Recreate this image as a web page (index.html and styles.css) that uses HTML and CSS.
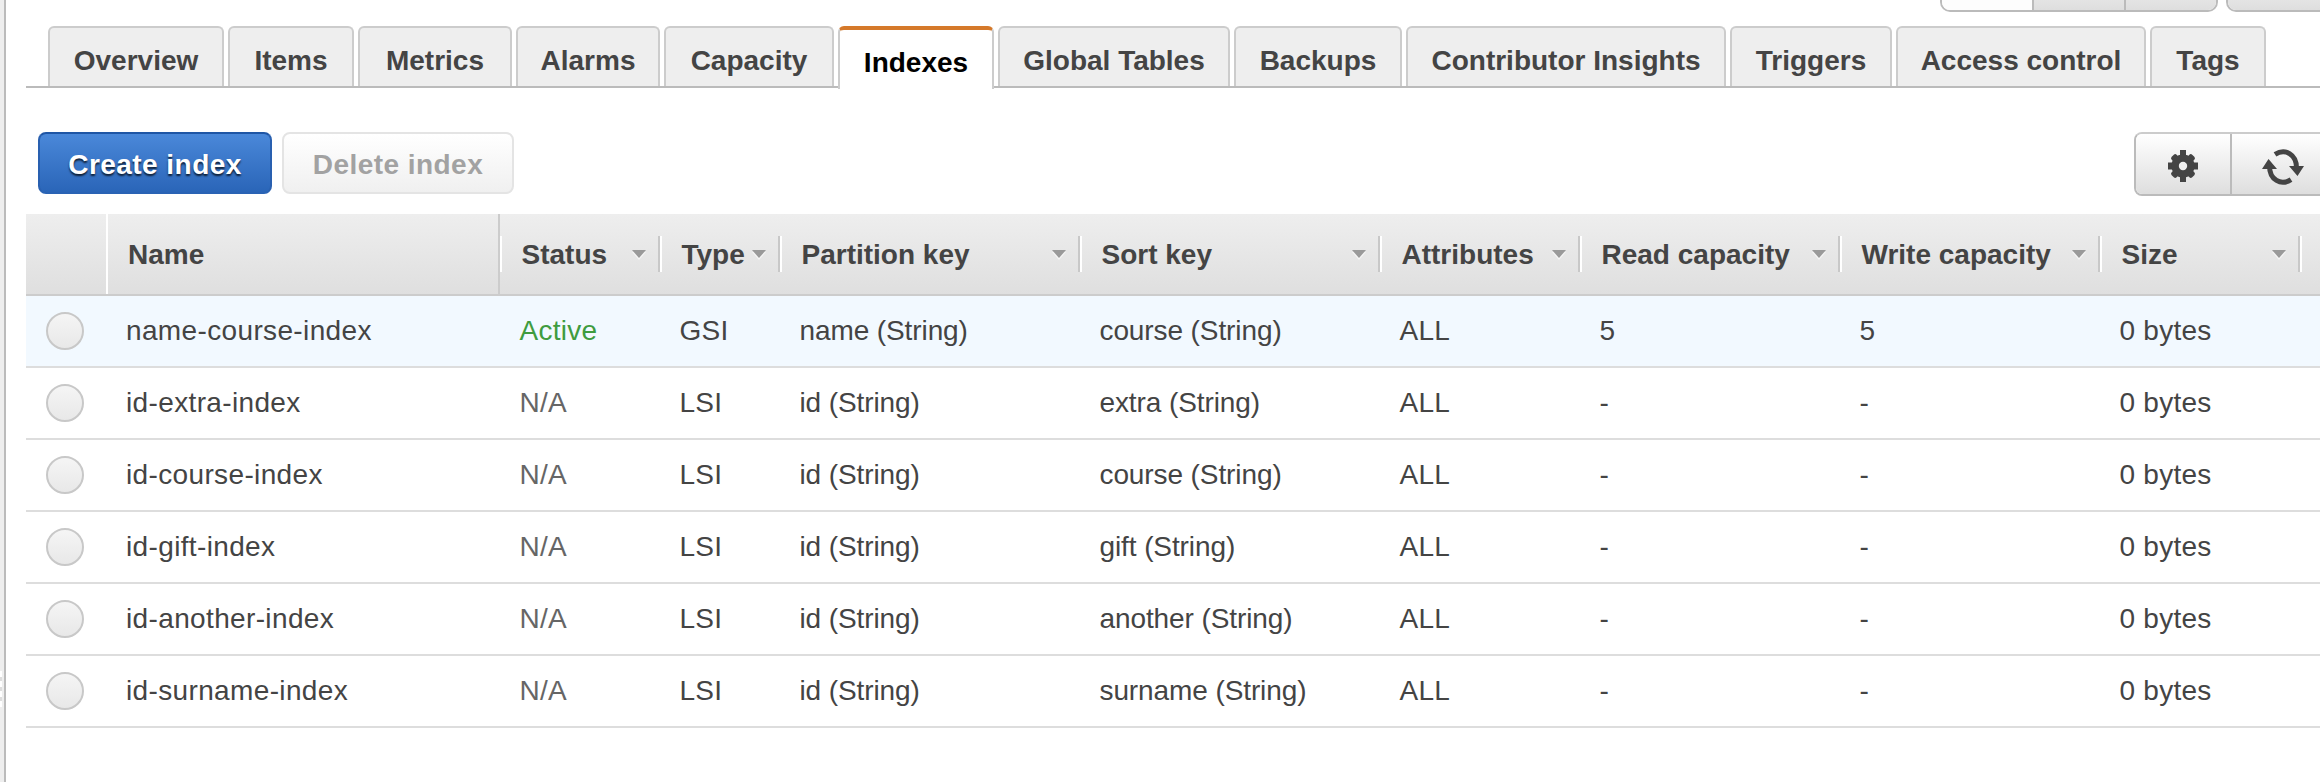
FILE: index.html
```html
<!DOCTYPE html>
<html lang="en">
<head>
<meta charset="utf-8">
<title>Indexes</title>
<link rel="stylesheet" href="styles.css">
</head>
<body>
<div class="app">
  <div class="splitter"><span class="grip"></span></div>
  <main class="panel">
    <div class="window-controls">
      <div class="segments"><span class="segment selected"></span><span class="segment"></span><span class="segment"></span></div>
      <div class="segments extra"><span class="segment"></span></div>
    </div>
    <nav class="tabs">
      <a class="tab t-overview">Overview</a>
      <a class="tab t-items">Items</a>
      <a class="tab t-metrics">Metrics</a>
      <a class="tab t-alarms">Alarms</a>
      <a class="tab t-capacity">Capacity</a>
      <a class="tab t-indexes active">Indexes</a>
      <a class="tab t-global">Global Tables</a>
      <a class="tab t-backups">Backups</a>
      <a class="tab t-insights">Contributor Insights</a>
      <a class="tab t-triggers">Triggers</a>
      <a class="tab t-access">Access control</a>
      <a class="tab t-tags">Tags</a>
    </nav>
    <div class="toolbar">
      <button class="btn primary">Create index</button>
      <button class="btn disabled" disabled>Delete index</button>
      <div class="tools">
        <button class="tool" aria-label="Settings">
          <svg class="gear" width="32" height="34" viewBox="-16 -17 32 34"><g fill="#444"><rect x="-3" y="-16" width="6" height="32"/><rect x="-15" y="-3.5" width="30" height="7"/><rect x="-3.5" y="-14.5" width="7" height="29" rx="2" transform="rotate(45)"/><rect x="-3.5" y="-14.5" width="7" height="29" rx="2" transform="rotate(-45)"/></g><circle r="7.8" fill="none" stroke="#444" stroke-width="7.6"/><circle r="4.2" fill="#f0f0f0"/></svg>
        </button>
        <button class="tool" aria-label="Refresh">
          <svg class="refresh" width="42" height="38" viewBox="-21 -19 42 38"><g fill="none" stroke="#444" stroke-width="5"><path d="M-8-12.6C2-19 13.5-13 13.5 1"/><path d="M8 12.6C-2 19-13.5 13-13.5-1"/></g><path d="M6-1L21-1L14.5 9ZM-6 2L-21 2L-14.5-8Z" fill="#444"/></svg>
        </button>
      </div>
    </div>
    <div class="table">
      <div class="row head">
        <div class="cell pick"></div>
        <div class="cell name">Name</div>
        <div class="cell">Status<i class="arrow"></i></div>
        <div class="cell">Type<i class="arrow"></i></div>
        <div class="cell">Partition key<i class="arrow"></i></div>
        <div class="cell">Sort key<i class="arrow"></i></div>
        <div class="cell">Attributes<i class="arrow"></i></div>
        <div class="cell">Read capacity<i class="arrow"></i></div>
        <div class="cell">Write capacity<i class="arrow"></i></div>
        <div class="cell">Size<i class="arrow"></i></div>
        <div class="cell"></div>
      </div>
      <div class="row highlighted"><div class="cell pick"><span class="radio"></span></div><div class="cell title">name-course-index</div><div class="cell ok">Active</div><div class="cell">GSI</div><div class="cell key">name (String)</div><div class="cell key">course (String)</div><div class="cell">ALL</div><div class="cell">5</div><div class="cell">5</div><div class="cell">0 bytes</div></div>
      <div class="row"><div class="cell pick"><span class="radio"></span></div><div class="cell title">id-extra-index</div><div class="cell na">N/A</div><div class="cell">LSI</div><div class="cell key">id (String)</div><div class="cell key">extra (String)</div><div class="cell">ALL</div><div class="cell">-</div><div class="cell">-</div><div class="cell">0 bytes</div></div>
      <div class="row"><div class="cell pick"><span class="radio"></span></div><div class="cell title">id-course-index</div><div class="cell na">N/A</div><div class="cell">LSI</div><div class="cell key">id (String)</div><div class="cell key">course (String)</div><div class="cell">ALL</div><div class="cell">-</div><div class="cell">-</div><div class="cell">0 bytes</div></div>
      <div class="row"><div class="cell pick"><span class="radio"></span></div><div class="cell title">id-gift-index</div><div class="cell na">N/A</div><div class="cell">LSI</div><div class="cell key">id (String)</div><div class="cell key">gift (String)</div><div class="cell">ALL</div><div class="cell">-</div><div class="cell">-</div><div class="cell">0 bytes</div></div>
      <div class="row"><div class="cell pick"><span class="radio"></span></div><div class="cell title">id-another-index</div><div class="cell na">N/A</div><div class="cell">LSI</div><div class="cell key">id (String)</div><div class="cell key">another (String)</div><div class="cell">ALL</div><div class="cell">-</div><div class="cell">-</div><div class="cell">0 bytes</div></div>
      <div class="row"><div class="cell pick"><span class="radio"></span></div><div class="cell title">id-surname-index</div><div class="cell na">N/A</div><div class="cell">LSI</div><div class="cell key">id (String)</div><div class="cell key">surname (String)</div><div class="cell">ALL</div><div class="cell">-</div><div class="cell">-</div><div class="cell">0 bytes</div></div>
    </div>
  </main>
</div>
</body>
</html>
```
FILE: styles.css
```css
* { box-sizing: border-box; }
body {
  margin: 0;
  background: #fff;
  color: #444;
  font: 28px/1 "Liberation Sans", Arial, sans-serif;
  overflow: hidden;
}
.app { display: flex; height: 782px; }
.splitter {
  display: flex;
  flex: 0 0 6px;
  background: #eee;
  border-right: 2px solid #bbb;
}
.grip {
  width: 2px;
  height: 36px;
  margin-top: 671px;
  background: repeating-linear-gradient(#fff 0 6px, #ddd 6px 10px);
}
.panel { flex: 1; min-width: 0; padding-left: 20px; overflow: hidden; }

.window-controls { display: flex; gap: 8px; height: 26px; padding-left: 1914px; }
.segments {
  display: flex;
  flex: 0 0 278px;
  height: 12px;
  border: 2px solid #bbb;
  border-top: 0;
  border-radius: 0 0 10px 10px;
  overflow: hidden;
}
.segment { flex: 1; background: linear-gradient(#e4e4e4, #dedede); }
.segment + .segment { border-left: 2px solid #bbb; }
.segment.selected { background: #fdfdfd; }

.tabs {
  display: flex;
  gap: 4px;
  height: 62px;
  padding-left: 22px;
  border-bottom: 2px solid #bbb;
}
.tab {
  flex: none;
  height: 60px;
  padding-top: 6px;
  border: 2px solid #ccc;
  border-bottom: 0;
  border-radius: 6px 6px 0 0;
  background: #eee;
  font-weight: bold;
  line-height: 54px;
  text-align: center;
  white-space: nowrap;
}
.tab.active {
  height: 63px;
  border-top: 4px solid #d5792a;
  background: #fff;
  color: #000;
}
.t-overview { width: 176px; }
.t-items { width: 126px; }
.t-metrics { width: 154px; }
.t-alarms { width: 144px; }
.t-capacity { width: 170px; }
.t-indexes { width: 156px; }
.t-global { width: 232px; }
.t-backups { width: 168px; }
.t-insights { width: 320px; }
.t-triggers { width: 162px; }
.t-access { width: 250px; }
.t-tags { width: 116px; }

.toolbar { display: flex; height: 126px; padding: 44px 0 0 12px; }
.btn {
  height: 62px;
  padding: 4px 0 0;
  border: 2px solid;
  border-radius: 8px;
  font: bold 28px/54px "Liberation Sans", Arial, sans-serif;
  letter-spacing: .45px;
}
.primary {
  width: 234px;
  margin-right: 10px;
  border-color: #1f56a5 #2960b0 #2a63b4;
  background: linear-gradient(#4a88d9, #2a65b8);
  color: #fff;
  text-shadow: 0 2px 2px rgba(0, 0, 0, .75);
}
.disabled {
  width: 232px;
  border-color: #e4e4e4;
  background: linear-gradient(#fff, #f0f0f0);
  color: #a2a2a2;
}
.tools {
  display: flex;
  width: 198px;
  height: 64px;
  margin-left: auto;
  margin-right: -12px;
  border: 2px solid #bbb;
  border-top-color: #ccc;
  border-radius: 8px;
}
.tool {
  flex: 0 0 94px;
  display: flex;
  padding: 0;
  border: 0;
  background: linear-gradient(#fff, #dedede);
  border-radius: 6px 0 0 6px;
}
.tool + .tool { flex: 1; border-left: 2px solid #bbb; border-radius: 0; }
.gear { margin: 15px 0 0 31px; }
.refresh { margin: 14px 0 0 30px; }

.row {
  display: grid;
  grid-template-columns: 82px 392px 160px 120px 300px 300px 200px 260px 260px 200px 20px;
  height: 72px;
  border-bottom: 2px solid #ddd;
}
.highlighted { background: #f2f9ff; }
.cell {
  display: flex;
  align-items: center;
  padding-left: 19.5px;
  letter-spacing: .25px;
  white-space: nowrap;
}
.title { padding-left: 18px; letter-spacing: .36px; }
.key { letter-spacing: -.1px; }
.pick { padding-left: 20px; }
.ok { color: #3f9c3f; }
.na { color: #666; }
.head {
  height: 82px;
  border-bottom-color: #ccc;
  background: linear-gradient(#eee, #dfdfdf);
  font-weight: bold;
}
.head .cell {
  padding: 2px 14px 0 21.5px;
  letter-spacing: 0;
  background:
    linear-gradient(#fff, #fff) left 22px / 2px 36px no-repeat,
    linear-gradient(#c8c8c8, #c8c8c8) right 22px / 2px 36px no-repeat;
}
.head .pick { background: none; border-right: 2px solid #fff; }
.head .name { padding-left: 20px; background: none; border-right: 2px solid #ccc; }
.head .cell:last-child { background: linear-gradient(#fff, #fff) left 22px / 2px 36px no-repeat; }
.arrow {
  width: 14px;
  height: 8px;
  margin-left: auto;
  margin-bottom: 2px;
  border: 7px solid transparent;
  border-top: 8px solid #999;
  border-bottom: 0;
  filter: drop-shadow(0 2px 0 #f4f4f4);
}
.radio {
  width: 38px;
  height: 38px;
  border: 2px solid #c8c8c8;
  border-radius: 50%;
  background: linear-gradient(#f5f5f5, #e8e8e8);
}
```
